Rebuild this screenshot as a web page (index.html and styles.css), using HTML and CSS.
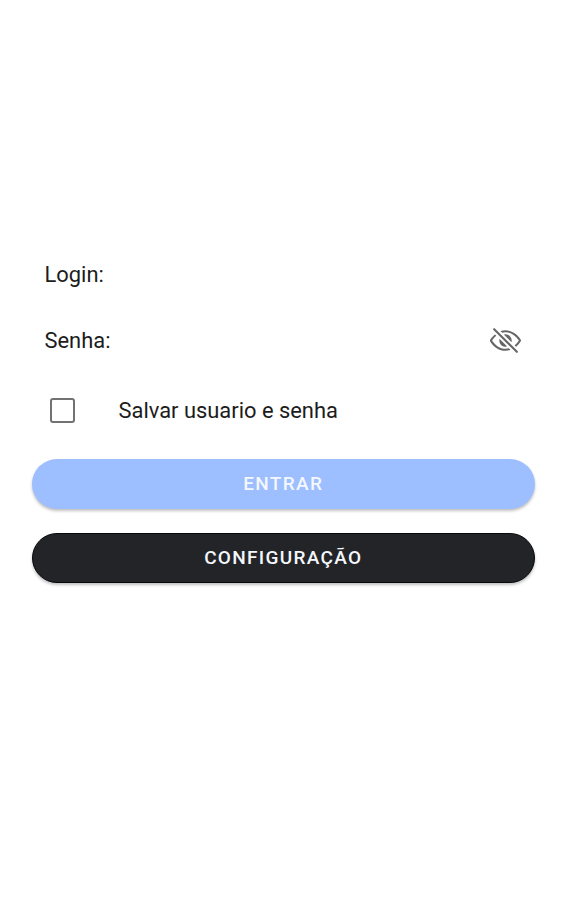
FILE: index.html
```html
<!DOCTYPE html>
<html lang="pt-BR">
<head>
    <meta charset="UTF-8">
    <meta name="viewport" content="width=device-width, initial-scale=1.0">
    <title>Login</title>
    <link rel="stylesheet" href="styles.css">
</head>
<body>
    <form class="login">
        <div class="field">
            <label for="login">Login:</label>
            <input type="text" id="login">
        </div>
        <div class="field">
            <label for="senha">Senha:</label>
            <input type="password" id="senha">
            <button type="button" class="toggle" aria-label="Mostrar senha">
                <svg viewBox="0 0 512 512" fill="currentColor">
                    <path d="M432 448a15.92 15.92 0 01-11.31-4.69l-352-352a16 16 0 0122.62-22.62l352 352A16 16 0 01432 448zM255.66 384c-41.49 0-81.5-12.28-118.92-36.5-34.07-22-64.74-53.51-88.7-91v-.08c19.94-28.57 41.78-52.73 65.24-72.21a2 2 0 00.14-2.94L93.5 161.38a2 2 0 00-2.71-.12c-24.92 21-48.05 46.76-69.08 76.92a31.92 31.92 0 00-.64 35.54c26.41 41.33 60.4 76.14 98.28 100.65C162 402 207.9 416 255.66 416a239.13 239.13 0 0075.8-12.58 2 2 0 00.77-3.31l-21.58-21.58a4 4 0 00-3.83-1 204.8 204.8 0 01-51.16 6.47zM490.84 238.6c-26.46-40.92-60.79-75.68-99.27-100.53C349 110.55 302 96 255.66 96a227.34 227.34 0 00-74.89 12.83 2 2 0 00-.75 3.31l21.55 21.55a4 4 0 003.88 1 192.82 192.82 0 0150.21-6.69c40.69 0 80.58 12.43 118.55 37 34.71 22.4 65.74 53.88 89.76 91a.13.13 0 010 .16 310.72 310.72 0 01-64.12 72.73 2 2 0 00-.15 2.95l19.9 19.89a2 2 0 002.7.13 343.49 343.49 0 0068.64-78.48 32.2 32.2 0 00-.1-34.78z"/>
                    <path d="M256 160a95.88 95.88 0 00-21.37 2.4 2 2 0 00-1 3.38l112.59 112.56a2 2 0 003.38-1A96 96 0 00256 160zM165.78 233.66a2 2 0 00-3.38 1 96 96 0 00115 115 2 2 0 001-3.38z"/>
                </svg>
            </button>
        </div>
        <label class="save">
            <input type="checkbox" class="check">
            <span>Salvar usuario e senha</span>
        </label>
        <button type="submit" class="btn btn-primary">Entrar</button>
        <button type="button" class="btn btn-dark">Configuração</button>
    </form>
</body>
</html>
```
FILE: styles.css
```css
* {
    box-sizing: border-box;
}
body {
    margin: 0;
    background-color: #fff;
    font-family: Roboto, sans-serif;
    font-size: 21.9px;
    color: #1c1c1c;
}
.login {
    padding: 241px 29px 0 31.5px;
}
.field {
    display: flex;
    align-items: center;
    height: 66px;
    padding: 0 13px;
}
.field input {
    flex: 1;
    min-width: 0;
    border: none;
    outline: none;
    font: inherit;
    background: none;
}
.toggle {
    width: 33px;
    height: 33px;
    padding: 0;
    border: none;
    background: none;
    color: #666;
}
.toggle svg {
    display: block;
    width: 100%;
    height: 100%;
}
.save {
    display: flex;
    align-items: center;
    gap: 43.5px;
    height: 73px;
    padding: 1px 0 0 18.5px;
}
.check {
    appearance: none;
    width: 25px;
    height: 25px;
    margin: 0;
    border: 2px solid #727272;
    border-radius: 3px;
}
.btn {
    display: block;
    width: 100%;
    height: 50px;
    margin: 13px 0 24px;
    padding: 0 6px 2px;
    border: none;
    border-radius: 25px;
    font: 500 19px Roboto, sans-serif;
    letter-spacing: 1.3px;
    text-transform: uppercase;
    color: #f4f7fb;
    box-shadow: 0 2px 3px rgba(0, 0, 0, 0.25);
}
.btn-primary {
    background-color: #9dbeff;
}
.btn-dark {
    border: 1px solid #08090b;
    background-color: #222428;
}
```
